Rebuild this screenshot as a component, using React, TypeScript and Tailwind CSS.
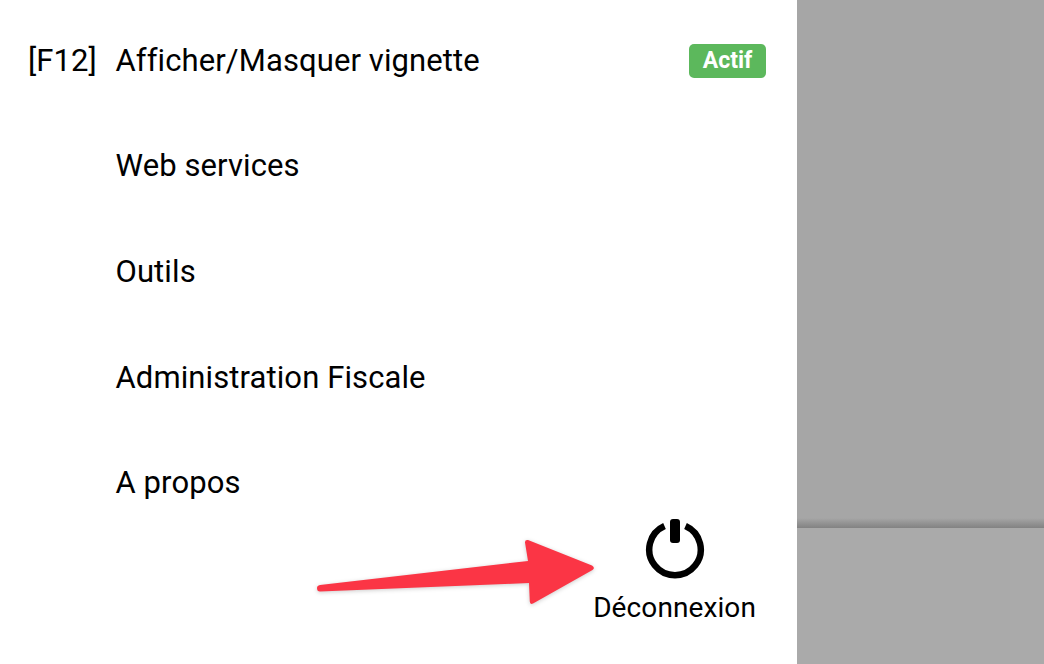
const ROWS = [
  { key: "[F12]", label: "Afficher/Masquer vignette", badge: "Actif" },
  { key: "", label: "Web services" },
  { key: "", label: "Outils" },
  { key: "", label: "Administration Fiscale" },
  { key: "", label: "A propos" },
];

function PowerIcon() {
  return (
    <svg width="60" height="60" viewBox="0 0 60 60" fill="none">
      <path d="M19.5 7 A25.75 25.75 0 1 0 40.5 7" stroke="#000" strokeWidth="6.5" />
      <rect x="25" y="0" width="10" height="24" rx="3" fill="#000" />
    </svg>
  );
}

function Arrow() {
  return (
    <svg
      className="absolute left-[310px] top-[532px] drop-shadow-[0_1px_2px_rgba(0,0,0,0.2)]"
      width="292"
      height="80"
      viewBox="310 532 292 80"
    >
      <path
        d="M320 585 L528 561 L525 542.5 Q524.8 539.5 528 540 L592 565.5 Q595.5 568 592.5 570 L533 603.5 Q530 605 529.8 601.5 L529 583 L320 591.5 Q317 591.5 317 588 Q317 585.5 320 585 Z"
        fill="#fb3545"
      />
    </svg>
  );
}

export default function App() {
  return (
    <div className="relative flex h-[664px] w-[1044px] overflow-hidden font-['Roboto',sans-serif] text-black">
      <div className="flex w-[797px] flex-col bg-white pt-[8px] pl-[28px] pr-[31px]">
        {ROWS.map((row) => (
          <div key={row.label} className="flex h-[105.7px] shrink-0 items-center text-[31px] tracking-[0.1px] [font-variant-ligatures:none]">
            <span className="w-[87.5px] shrink-0">{row.key}</span>
            <span className="flex-1">{row.label}</span>
            {row.badge && (
              <span className="flex h-[34px] w-[77px] items-center justify-center rounded-[5px] bg-[#5cb85c] text-[23px] font-bold tracking-normal text-white">
                {row.badge}
              </span>
            )}
          </div>
        ))}
        <div className="-mt-[17.5px] flex flex-col items-center self-end pr-[10px]">
          <PowerIcon />
          <span className="mt-[14px] text-[28px] leading-[30px] tracking-[0.1px]">Déconnexion</span>
        </div>
      </div>
      <div className="flex flex-1 flex-col">
        <div className="h-[528px] bg-[linear-gradient(to_bottom,#a6a6a6_0,#a6a6a6_518px,#828282_528px)]" />
        <div className="flex-1 bg-[#aaaaaa]" />
      </div>
      <Arrow />
    </div>
  );
}
